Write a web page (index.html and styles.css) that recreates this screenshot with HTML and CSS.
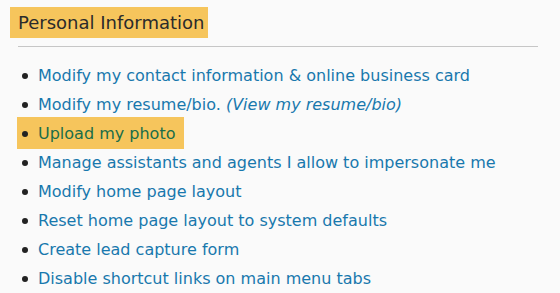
FILE: index.html
```html
<!DOCTYPE html>
<html lang="en">
<head>
    <meta charset="UTF-8">
    <title>Personal Information</title>
    <link rel="stylesheet" href="styles.css">
</head>
<body>
<div id="panel">
    <h2 class="title">Personal Information</h2>
    <hr class="rule">
    <ul class="links">
        <li><span><a href="#">Modify my contact information &amp; online business card</a></span></li>
        <li><span><a href="#">Modify my resume/bio.</a> <a href="#" class="sub">(View my resume/bio)</a></span></li>
        <li class="marked"><span><a href="#">Upload my photo</a></span></li>
        <li><span><a href="#">Manage assistants and agents I allow to impersonate me</a></span></li>
        <li><span><a href="#">Modify home page layout</a></span></li>
        <li><span><a href="#">Reset home page layout to system defaults</a></span></li>
        <li><span><a href="#">Create lead capture form</a></span></li>
        <li><span><a href="#">Disable shortcut links on main menu tabs</a></span></li>
    </ul>
</div>
</body>
</html>
```

FILE: styles.css
```css
*{
    margin: 0;
    padding: 0;
}
ul{
    list-style: none;
}
a{
    text-decoration: none;
    color: #1878ad;
}
body{
    background-color: #fafafa;
    font-family: "DejaVu Sans", Verdana, sans-serif;
}
#panel{
    padding: 7px 22px 0 10px;
}
.title{
    display: inline-block;
    background-color: #f6c55c;
    color: #2b2b2b;
    font-size: 18px;
    font-weight: normal;
    line-height: 31px;
    padding: 0 4px 0 8px;
}
.rule{
    border: 0;
    border-top: 1px solid #c6c6c6;
    margin: 8px 0 0 8px;
}
.links{
    padding: 14px 0 0 7px;
}
.links li{
    font-size: 16px;
    line-height: 29px;
    display: flex;
    align-items: center;
    gap: 10px;
    width: fit-content;
    padding: 0 5px;
}
.links li::before{
    content: "";
    width: 6px;
    height: 6px;
    border-radius: 50%;
    background-color: #222;
}
.links .sub{
    font-style: italic;
}
.links li.marked{
    background-color: #f6c55c;
    padding: 2px 9px 1px 5px;
    margin: -2px 0 -1px;
}
.links li.marked a{
    color: #1a6d49;
}
```
